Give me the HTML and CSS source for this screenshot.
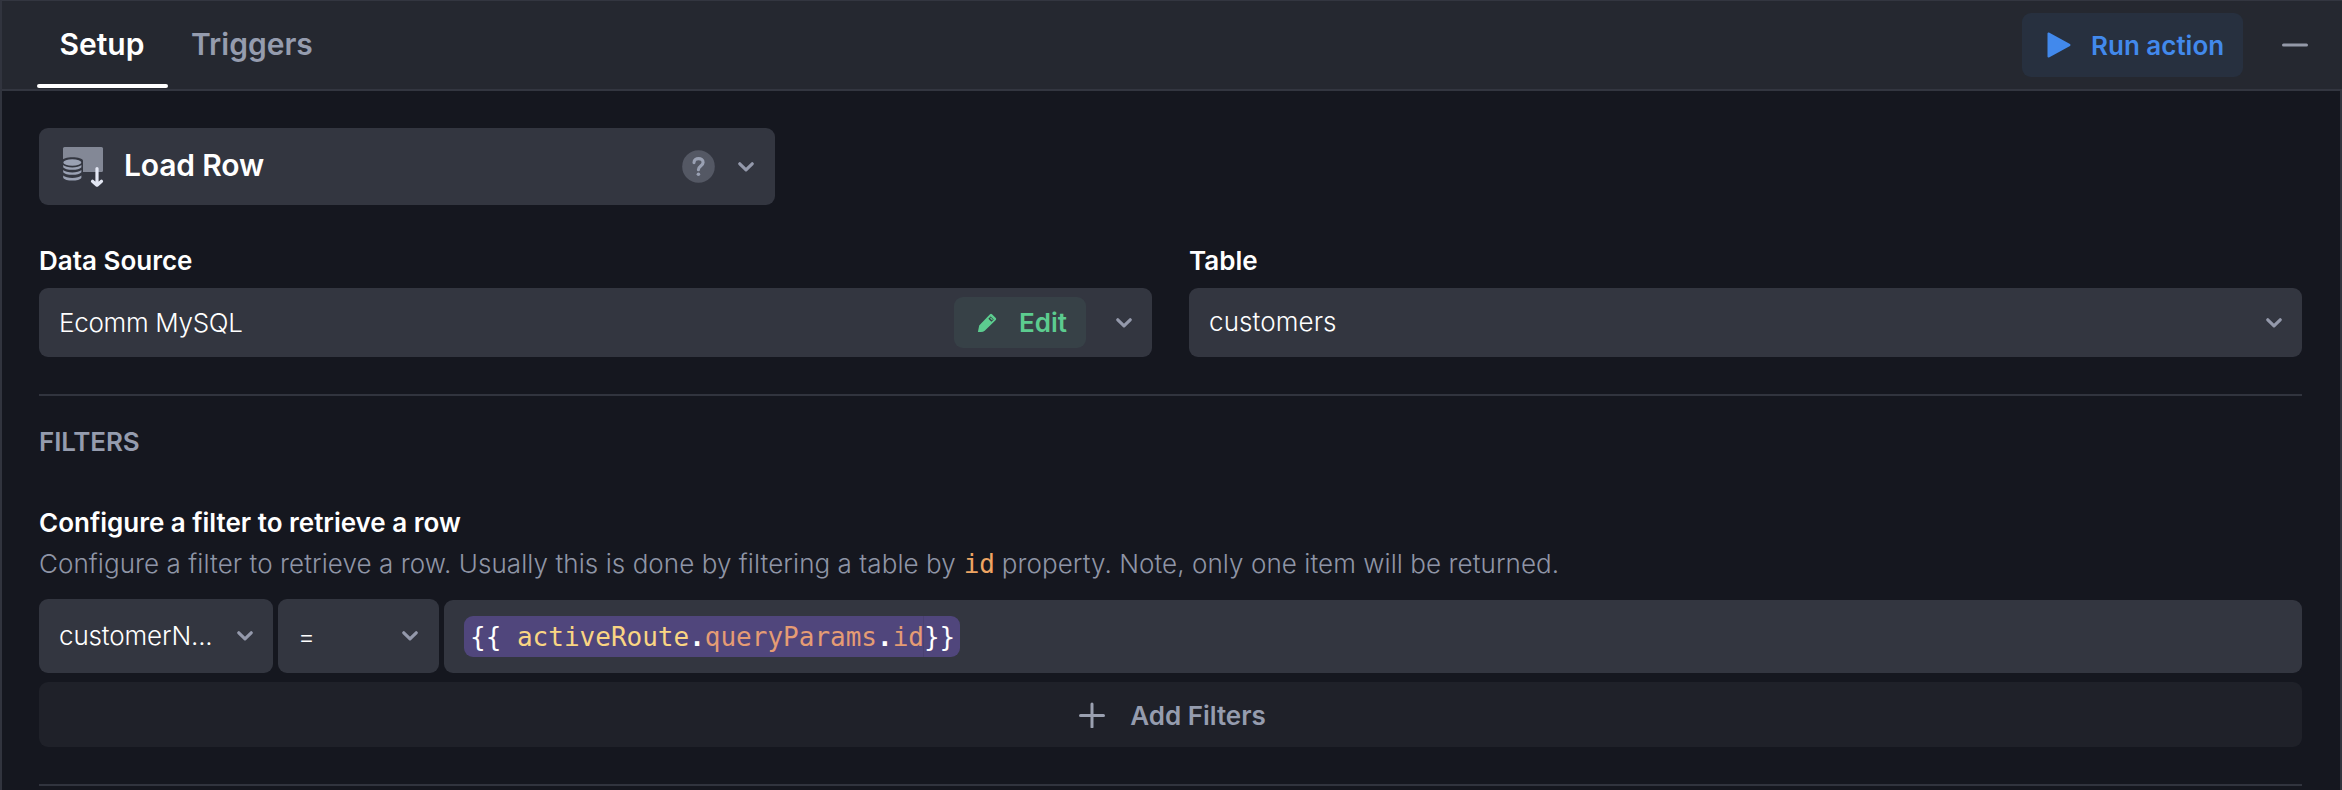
FILE: index.html
```html
<!DOCTYPE html>
<html lang="en">
<head>
<meta charset="utf-8">
<title>Load Row</title>
<link rel="stylesheet" href="styles.css">
</head>
<body>
<div class="panel">
  <header class="header">
    <nav class="tabs">
      <a class="tab tab-active">Setup</a>
      <a class="tab">Triggers</a>
    </nav>
    <div class="header-actions">
      <button class="run">
        <svg class="play" width="24" height="26" viewBox="0 0 24 26"><path d="M1.500 1.500v23L22.500 13z" fill="#4289ec" stroke="#4289ec" stroke-width="2" stroke-linejoin="round"/></svg>
        <span>Run action</span>
      </button>
      <svg class="minus" width="26" height="4" viewBox="0 0 26 4"><path d="M1.500 2h23" stroke="#9499a8" stroke-width="3" stroke-linecap="round"/></svg>
    </div>
  </header>
  <main class="content">
    <div class="action-select">
      <svg class="row-icon" width="42" height="42" viewBox="0 0 42 42">
        <rect x="1" y="1" width="40" height="25" rx="1.500" fill="#838896"/>
        <path d="M0 15c0-5 21-5 21 0v11H0z" fill="#333640"/>
        <g fill="#9aa1b3">
          <ellipse cx="10.300" cy="16.500" rx="9" ry="3.200"/>
          <path d="M1.200 19c3 3.300 15.200 3.300 18.200 0v2.200c-2 3.400-16.200 3.400-18.200 0z"/>
          <path d="M1.200 24c3 3.300 15.200 3.300 18.200 0v2.200c-2 3.400-16.200 3.400-18.200 0z"/>
          <path d="M1.200 29.500c3 3.300 15.200 3.300 18.200 0v2.200c-2 3.800-16.200 3.800-18.200 0z"/>
        </g>
        <path d="M35 22.500v16M30.500 35.200l4.500 4 4.500-4" fill="none" stroke="#e3e7f3" stroke-width="3.200" stroke-linecap="round" stroke-linejoin="round"/>
      </svg>
      <span class="action-name">Load Row</span>
      <svg class="help" width="33" height="33" viewBox="0 0 33 33"><circle cx="16.500" cy="16.500" r="16.300" fill="#545864"/><path d="M12 12.600c0-5.400 9.200-5.200 9.100-.2-.1 3.700-4.700 3.600-4.700 7.300" fill="none" stroke="#9aa1b3" stroke-width="3.100" stroke-linecap="round"/><circle cx="16.400" cy="24.200" r="1.800" fill="#9aa1b3"/></svg>
      <svg class="chev" width="16" height="10" viewBox="0 0 16 10"><path d="M1.800 1.800L8 7.800l6.200-6"/></svg>
    </div>
    <div class="fields">
      <div class="field">
        <label class="label">Data Source</label>
        <div class="select">
          <span class="value value-source">Ecomm MySQL</span>
          <button class="edit">
            <svg class="pencil" width="20" height="20" viewBox="0 0 20 20"><path fill="#5ccc8f" fill-rule="evenodd" d="M.9 19 2.200 12.400 13 1.200q1-.9 2 0l3.800 3.900q.9 1 0 1.900L7.700 17.700Q6.200 19 4 19zM13.600 3.500l-2.200 2.300 3 3 2.300-2.200z"/><path d="M13.400 4.800l2 2" stroke="#5ccc8f" stroke-width="1.200"/></svg>
            <span>Edit</span>
          </button>
          <svg class="chev" width="16" height="10" viewBox="0 0 16 10"><path d="M1.800 1.800L8 7.800l6.200-6"/></svg>
        </div>
      </div>
      <div class="field">
        <label class="label">Table</label>
        <div class="select">
          <span class="value value-table">customers</span>
          <svg class="chev" width="16" height="10" viewBox="0 0 16 10"><path d="M1.800 1.800L8 7.800l6.200-6"/></svg>
        </div>
      </div>
    </div>
    <section class="filters">
      <h2 class="section-title">FILTERS</h2>
      <h3 class="filter-title">Configure a filter to retrieve a row</h3>
      <p class="filter-note">Configure a filter to retrieve a row. Usually this is done by filtering a table by <code>id</code> property. Note, only one item will be returned.</p>
      <div class="filter-row">
        <div class="select column-select">
          <span class="value value-column">customerN...</span>
          <svg class="chev" width="16" height="10" viewBox="0 0 16 10"><path d="M1.800 1.800L8 7.800l6.200-6"/></svg>
        </div>
        <div class="select operator-select">
          <span class="value">=</span>
          <svg class="chev" width="16" height="10" viewBox="0 0 16 10"><path d="M1.800 1.800L8 7.800l6.200-6"/></svg>
        </div>
        <div class="expression">
          <div class="pill"><span>{{ </span><span class="root">activeRoute</span><b>.</b><span class="prop">queryParams</span><b>.</b><span class="prop">id</span><span class="close">}}</span></div>
        </div>
      </div>
      <button class="add">
        <svg class="plus" width="26" height="26" viewBox="0 0 26 26"><path d="M1.500 13.500h23M13 2v23" stroke="#9aa0b0" stroke-width="3" stroke-linecap="round"/></svg>
        <span class="add-text">Add Filters</span>
      </button>
    </section>
  </main>
</div>
</body>
</html>
```
FILE: styles.css
```css
* { box-sizing: border-box; }
body {
  margin: 0;
  background: #15171f;
  color: #fff;
  font-family: Inter, "Liberation Sans", sans-serif;
  font-size: 26px;
  overflow: hidden;
}
button { border: 0; font: inherit; margin: 0; padding: 0; }
.panel { height: 790px; border-left: 2px solid #31343e; border-top: 1px solid #333640; display: flex; flex-direction: column; }
.header {
  height: 90px;
  flex: none;
  display: flex;
  justify-content: space-between;
  background: #252830;
  border-bottom: 2px solid #333640;
}
.tabs { display: flex; padding-left: 35px; }
.tab {
  height: 87px;
  display: flex;
  padding: 25px 22px 0 23px;
  font-size: 30px;
  font-weight: 600;
  line-height: 36px;
  color: #959cae;
}
.tab-active { color: #fff; width: 131px; padding-left: 22.5px; position: relative; }
.tab-active::after {
  content: "";
  position: absolute;
  left: 0;
  right: 0;
  bottom: 0;
  height: 4px;
  border-radius: 2px;
  background: #fff;
}
.header-actions { display: flex; align-items: center; padding-right: 34px; gap: 39px; }
.run {
  width: 221px;
  height: 64px;
  border-radius: 9px;
  background: #27303f;
  color: #4289ec;
  display: flex;
  align-items: center;
  padding-left: 25px;
  gap: 20px;
  font-weight: 600;
}
.content { flex: 1; padding: 37px 38px 0 37px; border-right: 2px solid #31343e; }
.action-select {
  width: 736px;
  height: 77px;
  border-radius: 9px;
  background: #333640;
  display: flex;
  align-items: center;
  padding: 0 21px 0 23px;
  font-size: 30px;
  font-weight: 600;
}
.row-icon { margin-right: 20px; }
.action-name { padding-bottom: 3px; letter-spacing: -0.15px; }
.help { margin-left: auto; margin-right: 23px; }
.chev { flex: none; }
.chev path { fill: none; stroke: #9499ab; stroke-width: 3.2; stroke-linecap: round; stroke-linejoin: round; }
.fields { display: grid; grid-template-columns: 1fr 1fr; gap: 37px; margin-top: 40px; }
.label { display: block; height: 43px; line-height: 32px; font-weight: 600; white-space: nowrap; }
.select {
  height: 69px;
  border-radius: 9px;
  background: #333640;
  display: flex;
  align-items: center;
  padding: 0 20px;
}
.value { margin-right: auto; font-weight: 300; white-space: nowrap; }
.value-source { letter-spacing: -0.3px; }
.value-table { padding-bottom: 2px; letter-spacing: 0.1px; }
.value-column { letter-spacing: -0.15px; padding-bottom: 1px; }
.edit {
  width: 132px;
  height: 51px;
  border-radius: 9px;
  background: #374147;
  color: #5ccc8f;
  display: flex;
  align-items: center;
  padding-left: 23px;
  margin-right: 30px;
  gap: 22px;
  font-weight: 600;
}
.filters { margin-top: 37px; height: 392px; border-top: 2px solid #31343e; border-bottom: 2px solid #31343e; }
h2, h3, p { margin: 0; font-size: 26px; line-height: 32px; white-space: nowrap; }
.section-title { margin-top: 30px; color: #959cae; font-weight: 600; letter-spacing: -0.15px; }
.filter-title { margin-top: 49px; font-weight: 600; }
.filter-note { margin-top: 9px; color: #8f95a6; font-weight: 300; letter-spacing: 0.065px; }
code { margin: 0 -0.5px 0 0.5px; font-family: "DejaVu Sans Mono", monospace; font-weight: 400; font-size: 26px; line-height: 1; color: #eea563; letter-spacing: 0; }
.filter-row { display: flex; align-items: flex-end; gap: 5px; margin-top: 19px; }
.filter-row .select { height: 74px; }
.column-select { width: 234px; }
.operator-select { width: 161px; }
.filter-row .operator-select { padding-right: 21px; }
.expression { flex: 1; height: 73px; border-radius: 9px; background: #333640; display: flex; align-items: center; padding-left: 20px; }
.pill { height: 41px; line-height: 42px; border-radius: 9px; background: #50467c; padding: 0 5px 0 6px; font-family: "DejaVu Sans Mono", monospace; white-space: pre; }
.root { color: #fad583; }
.prop { color: #e59c74; }
.close { display: inline-block; height: 41px; vertical-align: top; box-shadow: -1px 0 #4a4172; }
.add {
  width: 100%;
  height: 65px;
  margin-top: 9px;
  border-radius: 9px;
  background: #1f2129;
  color: #959cae;
  display: flex;
  align-items: center;
  justify-content: center;
  padding-left: 4px;
  gap: 25px;
  font-weight: 600;
}
.add-text { padding-top: 2px; }
```
